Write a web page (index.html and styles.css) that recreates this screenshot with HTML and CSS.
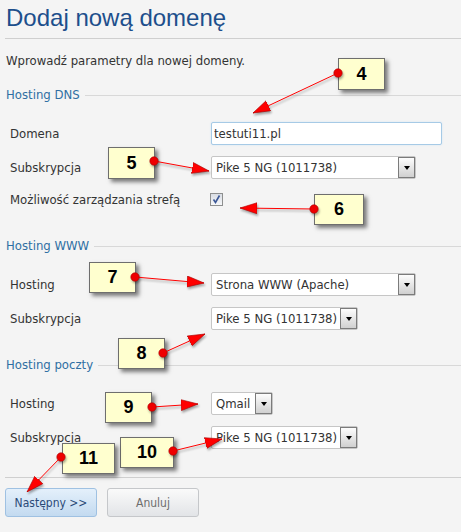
FILE: index.html
```html
<!DOCTYPE html>
<html lang="pl">
<head>
  <meta charset="UTF-8">
  <meta name="viewport" content="width=device-width, initial-scale=1.0">
  <title>Dodaj nową domenę</title>
  <link rel="stylesheet" href="styles.css">
</head>

<body>
  <div class="page">
    <h1 class="title">Dodaj nową domenę</h1>
    <hr class="rule">
    <p class="intro">Wprowadź parametry dla nowej domeny.</p>

    <div class="section dns">
      <div class="legend"><span>Hosting DNS</span></div>
      <div class="row first">
        <label for="domain">Domena</label>
        <input class="field" id="domain" type="text" value="testuti11.pl">
      </div>
      <div class="row">
        <label>Subskrypcja</label>
        <div class="select wide"><span class="value">Pike 5 NG (1011738)</span><span class="drop"></span></div>
      </div>
      <div class="row check">
        <label>Możliwość zarządzania strefą</label>
        <span class="checkbox">
          <svg width="11" height="11" viewBox="0 0 11 11"><path d="M2.5 5.5 L4.5 8.5 L8.5 1.5" fill="none" stroke="#3b5796" stroke-width="1.6"/></svg>
        </span>
      </div>
    </div>

    <div class="section">
      <div class="legend"><span>Hosting WWW</span></div>
      <div class="row first">
        <label>Hosting</label>
        <div class="select wide"><span class="value">Strona WWW (Apache)</span><span class="drop"></span></div>
      </div>
      <div class="row">
        <label>Subskrypcja</label>
        <div class="select mid"><span class="value">Pike 5 NG (1011738)</span><span class="drop"></span></div>
      </div>
    </div>

    <div class="section">
      <div class="legend"><span>Hosting poczty</span></div>
      <div class="row first">
        <label>Hosting</label>
        <div class="select small"><span class="value">Qmail</span><span class="drop"></span></div>
      </div>
      <div class="row">
        <label>Subskrypcja</label>
        <div class="select mid"><span class="value">Pike 5 NG (1011738)</span><span class="drop"></span></div>
      </div>
    </div>

    <hr class="rule bottom">
    <div class="actions">
      <button class="button primary">Następny &gt;&gt;</button>
      <button class="button plain">Anuluj</button>
    </div>

    <!-- annotation callouts -->
    <div class="note n4">4</div>
    <div class="note n5">5</div>
    <div class="note n6">6</div>
    <div class="note n7">7</div>
    <div class="note n8">8</div>
    <div class="note n9">9</div>
    <div class="note n10">10</div>
    <div class="note n11">11</div>

    <svg class="arrows" width="461" height="532" viewBox="0 0 461 532">
      <defs>
        <marker id="head" viewBox="0 0 17 12" refX="17" refY="6" markerWidth="17" markerHeight="12" markerUnits="userSpaceOnUse" orient="auto">
          <path d="M0 0.5 L17 6 L0 11.5 Z" fill="#f00" stroke="#a00" stroke-width="0.6"/>
        </marker>
        <marker id="dot" viewBox="0 0 10 10" refX="5" refY="5" markerWidth="10" markerHeight="10" markerUnits="userSpaceOnUse">
          <circle cx="5" cy="5" r="4.2" fill="#e00" stroke="#a00" stroke-width="0.6"/>
        </marker>
      </defs>
      <g stroke="#f00" stroke-width="1" marker-start="url(#dot)" marker-end="url(#head)">
        <line x1="338" y1="73" x2="253" y2="113"/>
        <line x1="154" y1="161" x2="209" y2="171"/>
        <line x1="314" y1="209" x2="240" y2="208"/>
        <line x1="135" y1="277" x2="204" y2="283"/>
        <line x1="163" y1="353" x2="205" y2="334"/>
        <line x1="152" y1="407" x2="198" y2="404"/>
        <line x1="173" y1="451" x2="222" y2="439"/>
        <line x1="61" y1="457" x2="27" y2="492"/>
      </g>
    </svg>
  </div>
</body>
</html>
```

FILE: styles.css
```css
body {
  margin: 0;
  background-color: #f4f4f4;
  color: #333;
  font-family: "DejaVu Sans Condensed", "Liberation Sans", sans-serif;
  font-size: 13px;
}

.page {
  position: relative;
  width: 461px;
  height: 532px;
  padding-left: 5px;
  box-sizing: border-box;
  overflow: hidden;
}

.title {
  margin: 0;
  padding: 3px 0 0 1px;
  font: normal 24px/30px "Liberation Sans", Arial, sans-serif;
  color: #1d4f8c;
}

.rule {
  height: 0;
  margin: 5px 0 0;
  border: 0;
  border-top: 1px solid #cfcfcf;
}

.rule.bottom {
  margin-top: 28px;
}

.intro {
  margin: 14px 0 0 1px;
  line-height: 16px;
}

.section {
  margin-top: 25px;
}

.section.dns {
  margin-top: 16px;
}

.legend {
  display: flex;
  align-items: center;
  height: 18px;
  padding-left: 1px;
  color: #2f6fa3;
  font-size: 13px;
}

.legend::after {
  content: '';
  flex: 1;
  margin: 3px 0 0 5px;
  border-top: 1px solid #d8d8d8;
}

.row {
  display: grid;
  grid-template-columns: 206px auto;
  align-items: center;
  height: 23px;
  margin-top: 11px;
}

.row.first {
  margin-top: 19px;
}

.row.check {
  margin-top: 9px;
}

.row label {
  padding-left: 5px;
}

.field {
  box-sizing: border-box;
  width: 231px;
  height: 23px;
  margin: 0;
  padding: 0 2px;
  border: 1px solid #a6cae6;
  border-radius: 2px;
  background: #fff;
  box-shadow: 0 0 2px #cde2f3;
  color: #333;
  font: inherit;
  outline: none;
}

.select {
  display: flex;
  align-items: center;
  box-sizing: border-box;
  height: 23px;
  padding-left: 4px;
  border: 1px solid #c6c6c6;
  border-radius: 2px;
  background: #fff;
}

.select.wide {
  width: 205px;
}

.select.mid {
  width: 147px;
}

.select.small {
  width: 62px;
}

.select .value {
  flex: 1;
  white-space: nowrap;
  overflow: hidden;
}

.select .drop {
  display: flex;
  align-items: center;
  justify-content: center;
  box-sizing: border-box;
  width: 17px;
  height: 21px;
  border: 1px solid #7b7b7b;
  background: linear-gradient(#fdfdfd, #d0d0d0);
}

.select .drop::before {
  content: '';
  border-left: 3.5px solid transparent;
  border-right: 3.5px solid transparent;
  border-top: 4px solid #000;
}

.checkbox {
  display: flex;
  align-items: center;
  justify-content: center;
  box-sizing: border-box;
  width: 13px;
  height: 13px;
  margin-left: -1px;
  border: 1px solid #8e8f8f;
  background: linear-gradient(#d9dde4, #f6f7f9);
}

.actions {
  display: flex;
  gap: 10px;
  margin-top: 10px;
}

.button {
  box-sizing: border-box;
  width: 92px;
  height: 29px;
  padding: 0;
  border-radius: 3px;
  font: inherit;
  font-size: 12px;
  cursor: pointer;
}

.button.primary {
  border: 1px solid #9fc1e2;
  background: linear-gradient(#e4f0fb, #c3daf0);
  color: #2b4a78;
}

.button.plain {
  border: 1px solid #c5c7ca;
  background: linear-gradient(#fafafa, #e2e4e7);
  color: #6d6d6d;
}

.note {
  position: absolute;
  display: flex;
  align-items: center;
  justify-content: center;
  box-sizing: border-box;
  width: 47px;
  height: 32px;
  border: 1px solid #6e6e6e;
  background: #ffffcf;
  box-shadow: 3px 3px 4px rgba(0, 0, 0, 0.5);
  color: #000;
  font: bold 18px "Liberation Sans", Arial, sans-serif;
}

.n4 { left: 338px; top: 58px; }
.n5 { left: 108px; top: 147px; }
.n6 { left: 314px; top: 194px; width: 50px; height: 31px; }
.n7 { left: 89px; top: 262px; height: 31px; }
.n8 { left: 118px; top: 338px; height: 31px; }
.n9 { left: 105px; top: 392px; height: 31px; }
.n10 { left: 120px; top: 437px; width: 54px; height: 31px; }
.n11 { left: 62px; top: 443px; width: 53px; height: 31px; }

.arrows {
  position: absolute;
  left: 0;
  top: 0;
  pointer-events: none;
  filter: drop-shadow(1px 2px 1px rgba(0, 0, 0, 0.35));
}
```
